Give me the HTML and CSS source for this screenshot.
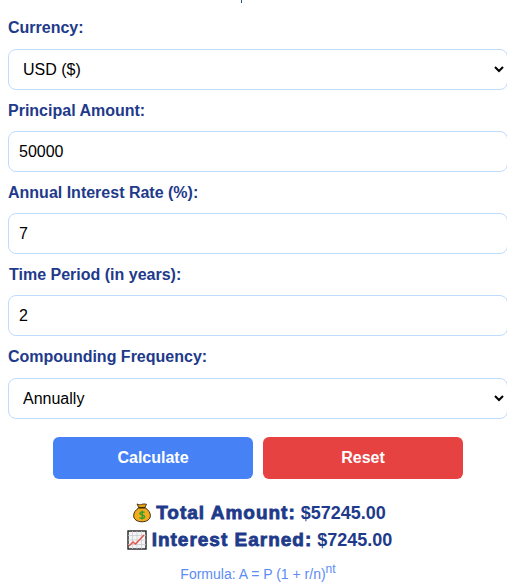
FILE: index.html
```html
<!DOCTYPE html>
<html lang="en">
<head>
    <meta charset="UTF-8">
    <meta name="viewport" content="width=device-width, initial-scale=1.0">
    <title>Compound Interest Calculator</title>
    <link rel="stylesheet" href="styles.css">
</head>
<body>
    <div class="container">
        <div class="top-mark"></div>
        <div class="field field-select">
            <label for="currency">Currency:</label>
            <select id="currency">
                <option>USD ($)</option>
                <option>EUR (€)</option>
                <option>GBP (£)</option>
            </select>
        </div>
        <div class="field">
            <label for="principal">Principal Amount:</label>
            <input type="text" id="principal" value="50000">
        </div>
        <div class="field">
            <label for="rate">Annual Interest Rate (%):</label>
            <input type="text" id="rate" value="7">
        </div>
        <div class="field">
            <label for="time" class="nudge">Time Period (in years):</label>
            <input type="text" id="time" value="2">
        </div>
        <div class="field field-select">
            <label for="frequency">Compounding Frequency:</label>
            <select id="frequency">
                <option>Annually</option>
                <option>Monthly</option>
                <option>Daily</option>
            </select>
        </div>

        <div class="buttons">
            <button class="btn-calc">Calculate</button>
            <button class="btn-reset">Reset</button>
        </div>

        <div class="results">
            <p>
                <svg class="emoji" viewBox="0 0 20 22" aria-hidden="true">
                    <path d="M4.500 1.500c1.500 1 3.500 1 5 .5 1.700-.6 4-.6 5.500-.1l-2 4h-6.500z" fill="#e8a31c" stroke="#3d2a08" stroke-width="1"/>
                    <path d="M6.500 5.800c-3.600 2.300-5.800 5.300-5.800 8.600 0 4.300 4 6.900 9.300 6.900s9.300-2.600 9.300-6.900c0-3.300-2.200-6.300-5.800-8.600z" fill="#f2ab1f" stroke="#3d2a08" stroke-width="1.100"/>
                    <path d="M6.500 5.600h7" stroke="#3d2a08" stroke-width="1.500"/>
                    <path d="M12.800 11c-.7-1-4.800-1.200-5.100.9-.2 2.400 5.500 1.400 5.200 4-.2 2-4.600 1.900-5.700.7M10.200 8.800v10" fill="none" stroke="#2f9e2f" stroke-width="1.500"/>
                </svg>
                <b>Total Amount:</b> <span>$57245.00</span>
            </p>
            <p>
                <svg class="emoji emoji-chart" viewBox="0 0 20 20" aria-hidden="true">
                    <rect x="1" y="1" width="18" height="18" fill="#f4f4f4" stroke="#222" stroke-width="1.400"/>
                    <path d="M1 5.500h18M1 10h18M1 14.500h18M5.500 1v18M10 1v18M14.500 1v18" stroke="#c4c8cc" stroke-width=".7"/>
                    <path d="M2 16l4-4 2.500 2 8.500-9" fill="none" stroke="#e2574c" stroke-width="1.500"/>
                </svg>
                <b>Interest Earned:</b> <span>$7245.00</span>
            </p>
        </div>

        <p class="formula">Formula: A = P (1 + r/n)<sup>nt</sup></p>
    </div>
</body>
</html>
```

FILE: styles.css
```css
html, body {
    overflow: hidden;
}
body {
    font-family: "Liberation Sans", Arial, sans-serif;
    background-color: white;
    color: black;
    margin: 0;
    padding: 0;
}
.container {
    width: 500px;
    height: 585px;
    padding: 18px 0 0 8px;
    box-sizing: content-box;
    position: relative;
}
.top-mark {
    position: absolute;
    left: 241px;
    top: 0;
    width: 1px;
    height: 3px;
    background-color: #1e5a70;
}
.field {
    margin-bottom: 11px;
}
label {
    display: block;
    margin-bottom: 11px;
    line-height: 19px;
    font-size: 16px;
    font-weight: bold;
    color: #1e3a8a;
}
.field-select label {
    margin-bottom: 12px;
}
.nudge {
    padding-left: 1px;
}
select, input {
    display: block;
    box-sizing: border-box;
    width: 500px;
    height: 41px;
    padding: 8px 10px;
    font-family: "Liberation Sans", Arial, sans-serif;
    font-size: 16px;
    color: black;
    background-color: white;
    border: 1px solid #bfdbfe;
    border-radius: 8px;
    outline: none;
}
.buttons {
    display: flex;
    justify-content: center;
    gap: 10px;
    margin-top: 18px;
}
.buttons button {
    width: 200px;
    height: 42px;
    border: none;
    border-radius: 6px;
    color: white;
    font-family: "Liberation Sans", Arial, sans-serif;
    font-size: 16px;
    font-weight: bold;
}
.btn-calc {
    background-color: #4682f6;
}
.btn-reset {
    background-color: #e74242;
}
.results {
    margin-top: 20px;
    padding-left: 3px;
    text-align: center;
    color: #1e3a8a;
    font-size: 18px;
    font-weight: bold;
}
.results p {
    margin: 0;
    height: 27px;
    line-height: 27px;
}
.results b {
    font-size: 19px;
    -webkit-text-stroke: 0.8px #1e3a8a;
    letter-spacing: 1px;
}
.emoji {
    width: 18px;
    height: 21px;
    vertical-align: -4px;
}
.emoji-chart {
    width: 20px;
    height: 20px;
}
.formula {
    margin: 8px 0 0;
    text-align: center;
    font-size: 14px;
    line-height: 16px;
    color: #5b8cf5;
}
.formula sup {
    font-size: 12px;
}
```
